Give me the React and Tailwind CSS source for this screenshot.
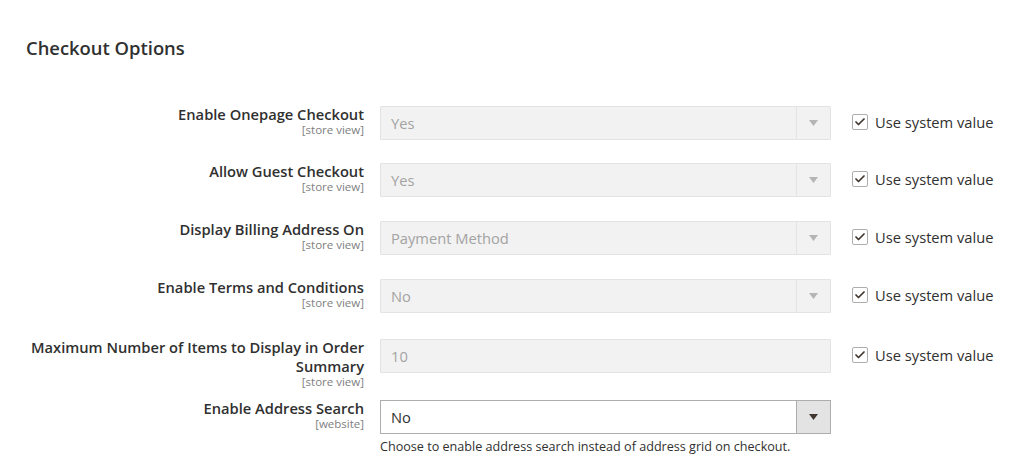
import { Check } from 'lucide-react'

const ROWS = [
  { label: 'Enable Onepage Checkout', scope: '[store view]', value: 'Yes', type: 'select', mt: 'mt-[47px]' },
  { label: 'Allow Guest Checkout', scope: '[store view]', value: 'Yes', type: 'select', mt: 'mt-[23px]' },
  { label: 'Display Billing Address On', scope: '[store view]', value: 'Payment Method', type: 'select', mt: 'mt-[24px]' },
  { label: 'Enable Terms and Conditions', scope: '[store view]', value: 'No', type: 'select', mt: 'mt-[24px]' },
  { label: 'Maximum Number of Items to Display in Order Summary', scope: '[store view]', value: '10', type: 'text', mt: 'mt-[26px]' },
]

function Arrow({ dark }) {
  return (
    <svg width="9" height="6" viewBox="0 0 9 6" className="block">
      <path d="M0 0h9L4.5 6z" fill={dark ? '#41362f' : '#b5b5b5'} />
    </svg>
  )
}

function Label({ label, scope }) {
  return (
    <div className="w-[340px] shrink-0 text-right -mt-[1px]">
      <div className="text-[14.7px] leading-[19px] font-semibold text-[#303030]">{label}</div>
      <div className="text-[11.5px] leading-[12px] text-[#808080]">{scope}</div>
    </div>
  )
}

function DisabledField({ value, type }) {
  return (
    <div className="w-[451px] h-[34px] shrink-0 flex border border-[#e3e3e3] bg-[#f2f2f2] rounded-[1px]">
      <div className="flex-1 flex items-center pl-[10px] text-[14.7px] text-[#a3a3a3]">{value}</div>
      {type === 'select' && (
        <div className="w-[34px] flex items-center justify-center border-l border-[#e3e3e3]">
          <Arrow />
        </div>
      )}
    </div>
  )
}

function SystemValue() {
  return (
    <div className="flex items-center gap-[7px] ml-[21px] mt-[6px]">
      <div className="w-[16px] h-[16px] border border-[#adadad] rounded-[2px] bg-white flex items-center justify-center">
        <Check size={12} strokeWidth={3.5} className="text-[#41362f]" />
      </div>
      <span className="text-[14.7px] leading-[20px] text-[#303030]">Use system value</span>
    </div>
  )
}

export default function App() {
  return (
    <div className="w-[1024px] h-[476px] bg-white overflow-hidden" style={{ fontFamily: '"Open Sans", "Liberation Sans", sans-serif' }}>
      <div className="pt-[37px] pl-[26px]">
        <h2 className="text-[18.4px] leading-[22px] font-semibold text-[#303030]">Checkout Options</h2>
      </div>

      <div className="pl-[24px]">
        {ROWS.map(row => (
          <div key={row.label} className={`flex items-start ${row.mt}`}>
            <Label label={row.label} scope={row.scope} />
            <div className="ml-[16px]">
              <DisabledField value={row.value} type={row.type} />
            </div>
            <SystemValue />
          </div>
        ))}

        <div className="flex items-start mt-[12px]">
          <Label label="Enable Address Search" scope="[website]" />
          <div className="ml-[16px]">
            <div className="w-[451px] h-[34px] flex border border-[#adadad] bg-white">
              <div className="flex-1 flex items-center pl-[10px] text-[14.7px] text-[#303030]">No</div>
              <div className="w-[34px] flex items-center justify-center bg-[#e3e3e3] border-l border-[#adadad]">
                <Arrow dark />
              </div>
            </div>
            <p className="mt-[4px] text-[12.6px] leading-[17px] text-[#303030]">
              Choose to enable address search instead of address grid on checkout.
            </p>
          </div>
        </div>
      </div>
    </div>
  )
}
